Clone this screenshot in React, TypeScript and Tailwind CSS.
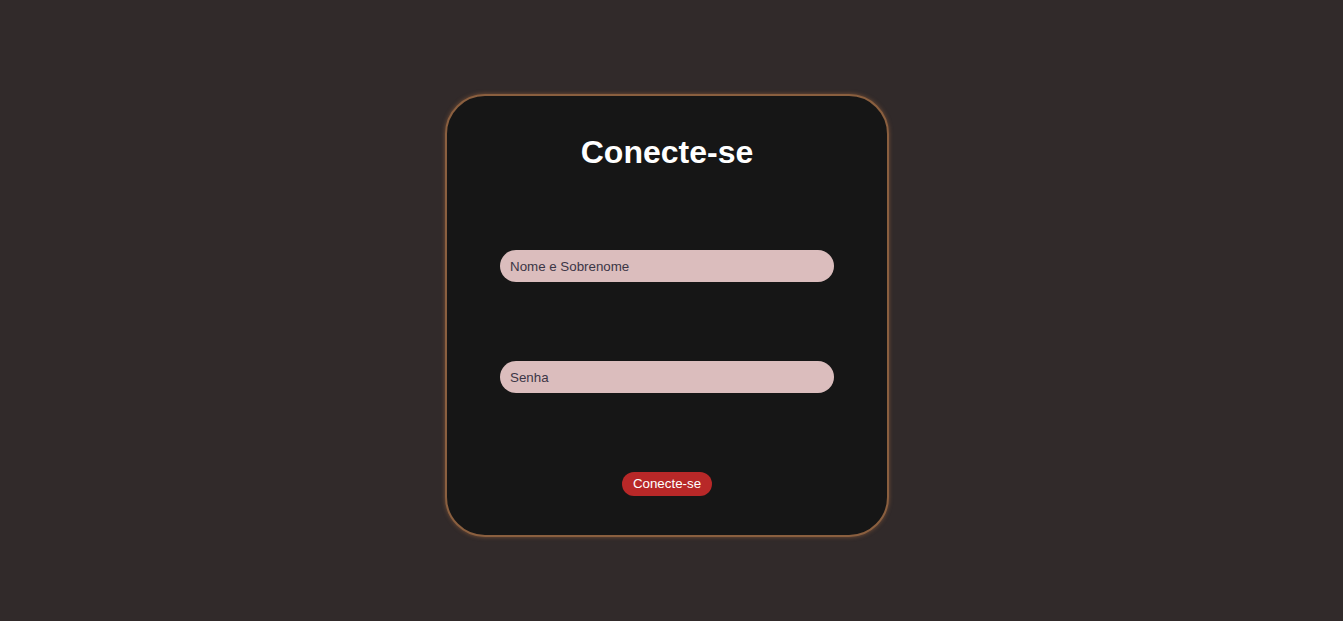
import React from 'react';

const App: React.FC = () => {
  return (
    <div className="min-h-[621px] w-full bg-[#312a2a] flex justify-center pt-[94px] pr-[9px] font-['Liberation_Sans',Arial,sans-serif]">
      <div className="w-[444px] h-[443px] rounded-[40px] bg-[#161616] border-2 border-[#8a5f3f] shadow-[0_0_4px_#7a5238] flex flex-col items-center pt-[38px]">
        <h1 className="text-[32px] leading-[37px] font-bold text-white">Conecte-se</h1>
        <input
          type="text"
          placeholder="Nome e Sobrenome"
          className="mt-[79px] w-[334px] h-[32px] rounded-full bg-[#dbbdbd] px-[10px] text-[13.33px] text-[#333] placeholder:text-[#3b3646] outline-none"
        />
        <input
          type="password"
          placeholder="Senha"
          className="mt-[79px] w-[334px] h-[32px] rounded-full bg-[#dbbdbd] px-[10px] text-[13.33px] text-[#333] placeholder:text-[#3b3646] outline-none"
        />
        <button className="mt-[79px] h-[24px] px-[11px] rounded-full bg-[#b82828] text-white text-[13.33px] leading-[24px]">
          Conecte-se
        </button>
      </div>
    </div>
  );
};

export default App;
